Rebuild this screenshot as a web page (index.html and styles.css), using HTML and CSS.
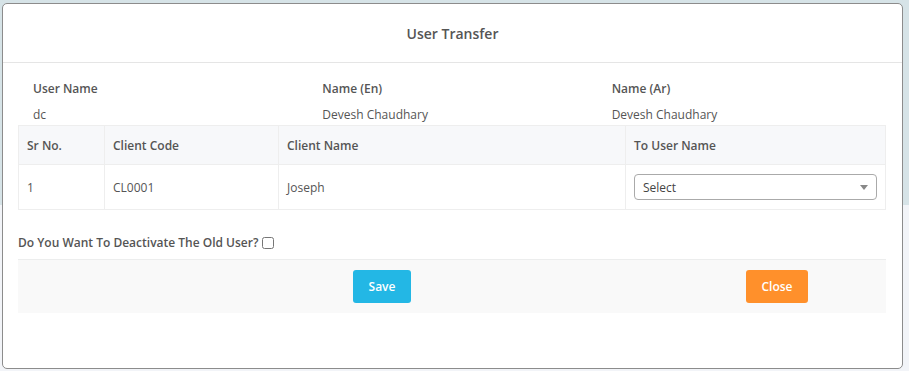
FILE: index.html
```html
<!DOCTYPE html>
<html lang="en">
<head>
  <meta charset="UTF-8" />
  <meta name="viewport" content="width=device-width, initial-scale=1" />
  <title>User Transfer</title>
  <link rel="stylesheet" href="styles.css">
</head>
<body>
  <div class="modal">
    <div class="modal-header">
      <h4>User Transfer</h4>
    </div>

    <div class="modal-body">
      <div class="info-row">
        <div class="info-col">
          <label>User Name</label>
          <p>dc</p>
        </div>
        <div class="info-col">
          <label>Name (En)</label>
          <p>Devesh Chaudhary</p>
        </div>
        <div class="info-col">
          <label>Name (Ar)</label>
          <p>Devesh Chaudhary</p>
        </div>
      </div>

      <table class="client-table">
        <thead>
          <tr>
            <th class="col-sr">Sr No.</th>
            <th class="col-code">Client Code</th>
            <th class="col-name">Client Name</th>
            <th>To User Name</th>
          </tr>
        </thead>
        <tbody>
          <tr>
            <td>1</td>
            <td>CL0001</td>
            <td>Joseph</td>
            <td>
              <div class="select-box">
                <span>Select</span>
                <svg viewBox="0 0 8 5" width="8" height="5"><path d="M0 0h8L4 5z" fill="#888"/></svg>
              </div>
            </td>
          </tr>
        </tbody>
      </table>

      <div class="deactivate">
        <span>Do You Want To Deactivate The Old User?</span>
        <input type="checkbox" />
      </div>

      <div class="modal-footer">
        <button class="btn btn-save">Save</button>
        <button class="btn btn-close">Close</button>
      </div>
    </div>
  </div>
</body>
</html>
```

FILE: styles.css
```css
body {
  margin: 0;
  padding: 3px 6px 0 2px;
  font-family: 'Open Sans', 'Segoe UI', sans-serif;
  font-size: 12px;
  color: #555;
  background: linear-gradient(to bottom, #d6e3e7 0, #d6e3e7 205px, #f2f4f8 205px);
  height: 371px;
  box-sizing: border-box;
  overflow: hidden;
}

.modal {
  background: #fff;
  border: 1px solid #8c8c8c;
  border-radius: 5px;
  height: 366px;
  box-sizing: border-box;
}

.modal-header {
  height: 58px;
  border-bottom: 1px solid #e5e5e5;
  display: flex;
  align-items: center;
  justify-content: center;
}

.modal-header h4 {
  margin: 0;
  font-size: 14px;
  font-weight: 600;
  color: #555;
}

.modal-body {
  padding: 16px 16px 0 15px;
}

.info-row {
  display: grid;
  grid-template-columns: repeat(3, 1fr);
}

.info-col {
  padding-left: 15px;
}

.info-col label {
  display: block;
  font-weight: 600;
  line-height: 20px;
}

.info-col p {
  margin: 6px 0 0 0;
  line-height: 20px;
}

.client-table {
  width: 100%;
  border-collapse: collapse;
  border: 1px solid #eee;
}

.client-table th,
.client-table td {
  border: 1px solid #eee;
  text-align: left;
  padding: 0 8px;
}

.client-table th {
  background: #f7f8fa;
  font-weight: 600;
  height: 38px;
}

.client-table td {
  height: 44px;
}

.col-sr { width: 69px; }
.col-code { width: 157px; }
.col-name { width: 330px; }

.select-box {
  display: flex;
  align-items: center;
  justify-content: space-between;
  height: 26px;
  border: 1px solid #aaa;
  border-radius: 4px;
  padding: 0 8px 0 8px;
  box-sizing: border-box;
  color: #444;
}

.deactivate {
  display: flex;
  align-items: center;
  font-weight: 600;
  line-height: 16px;
  margin: 25px 0 8px 0;
}

.deactivate input {
  width: 12px;
  height: 12px;
  margin: 0 0 0 4px;
}

.modal-footer {
  background: #f9f9f9;
  border-top: 1px solid #eceded;
  height: 53px;
  display: flex;
  align-items: center;
  padding-left: 335px;
  gap: 335px;
}

.btn {
  border: none;
  color: #fff;
  font-family: 'Open Sans', 'Segoe UI', sans-serif;
  font-size: 12px;
  font-weight: 600;
  height: 33px;
  border-radius: 3px;
  cursor: pointer;
}

.btn-save {
  background: #23b7e5;
  width: 58px;
}

.btn-close {
  background: #ff902b;
  width: 62px;
}
```
